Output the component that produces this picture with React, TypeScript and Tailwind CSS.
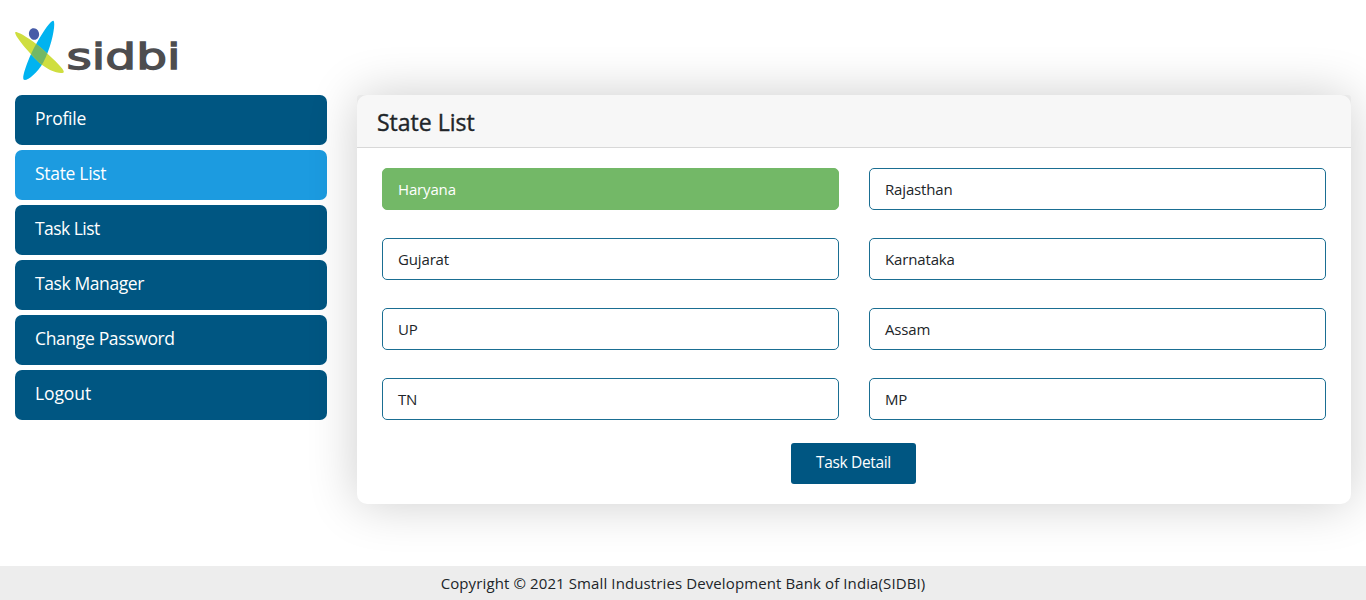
const navItems = [
  { label: 'Profile', tracking: 'tracking-[-0.250px]' },
  { label: 'State List', tracking: 'tracking-[-0.300px]' },
  { label: 'Task List', tracking: 'tracking-[-0.550px]' },
  { label: 'Task Manager', tracking: 'tracking-[-0.400px]' },
  { label: 'Change Password', tracking: 'tracking-[-0.350px]' },
  { label: 'Logout', tracking: 'tracking-[-0.100px]' },
];
const states = ['Haryana', 'Rajasthan', 'Gujarat', 'Karnataka', 'UP', 'Assam', 'TN', 'MP'];

const blueLeaf =
  'M38.600 1C41 4 36.500 27 28.500 42C21.500 54.500 11 62 8.600 59.600C6.500 57 14.500 35 22 22.500C29.500 9.500 36.500 -0.500 38.600 1Z';
const limeLeaf =
  'M0.300 12.200C1.500 10.500 18 20 29.500 31C42 42.500 50.500 50.500 48.500 52.500C45.500 54.500 32 51 21.500 40C9 27 -1 14.500 0.300 12.200Z';

function Logo() {
  return (
    <svg width="170" height="65" viewBox="0 0 170 65" className="block" role="img" aria-label="sidbi">
      <defs>
        <clipPath id="blue-leaf">
          <path d={blueLeaf} />
        </clipPath>
      </defs>
      <ellipse cx="19" cy="14" rx="5.100" ry="5.900" transform="rotate(-15 19 14)" fill="#465ba8" />
      <path d={blueLeaf} fill="#00b3f0" />
      <path d={limeLeaf} fill="#cfde3f" />
      <path d={limeLeaf} fill="#72b865" clipPath="url(#blue-leaf)" />
      <text
        x="51.500"
        y="49.300"
        textLength="114"
        lengthAdjust="spacingAndGlyphs"
        fontFamily="DejaVu Sans, sans-serif"
        fontSize="35.500"
        fill="#4d4d4f"
        stroke="#4d4d4f"
        strokeWidth="1.300"
        strokeLinejoin="miter"
      >
        sidbi
      </text>
    </svg>
  );
}

export default function App() {
  return (
    <div className="flex h-[600px] flex-col overflow-hidden bg-white font-['Open_Sans','Noto_Sans',sans-serif] text-[#212529]">
      <header className="h-[95px] shrink-0 px-[15px] pt-5">
        <Logo />
      </header>
      <main className="flex h-[471px] shrink-0 items-start gap-[30px] px-[15px]">
        <nav className="flex w-[312px] shrink-0 flex-col gap-[5px]">
          {navItems.map(({ label, tracking }) => (
            <a
              key={label}
              href="#"
              className={
                'block h-[50px] rounded-[7px] px-5 pt-[10px] text-[17.500px] leading-[27px] text-white ' +
                tracking +
                (label === 'State List' ? ' bg-[#1c9be0]' : ' bg-[#005682]')
              }
            >
              {label}
            </a>
          ))}
        </nav>
        <section className="h-[409px] flex-1 rounded-[10px] bg-white shadow-[0_0_50px_rgba(0,0,0,0.2)]">
          <div className="h-[53px] rounded-t-[3px] border-b border-black/[0.125] bg-black/[0.03] px-5 pt-[13px]">
            <h1 className="text-[23px] leading-[29px] font-medium [-webkit-text-stroke:0.400px_#212529]">State List</h1>
          </div>
          <div className="grid grid-cols-2 gap-x-[30px] gap-y-7 px-[25px] pt-5">
            {states.map((state) => (
              <button
                key={state}
                type="button"
                className={
                  'h-[42px] rounded-[5px] border px-[15px] text-left text-[15px] leading-6 tracking-[-0.150px] ' +
                  (state === 'Haryana'
                    ? 'border-[#73b867] bg-[#73b867] text-white'
                    : 'border-[#1a6e92] bg-white')
                }
              >
                {state}
              </button>
            ))}
          </div>
          <div className="flex justify-center pt-[23px] pr-px">
            <button type="button" className="h-[41px] w-[125px] rounded-[3px] bg-[#005682] pb-[3px] text-[15.500px] leading-6 tracking-[-0.350px] text-white">
              Task Detail
            </button>
          </div>
        </section>
      </main>
      <footer className="flex h-[34px] shrink-0 items-center justify-center bg-[#ededed] text-[15px] leading-6 tracking-[0.110px]">
        Copyright © 2021 Small Industries Development Bank of India(SIDBI)
      </footer>
    </div>
  );
}
